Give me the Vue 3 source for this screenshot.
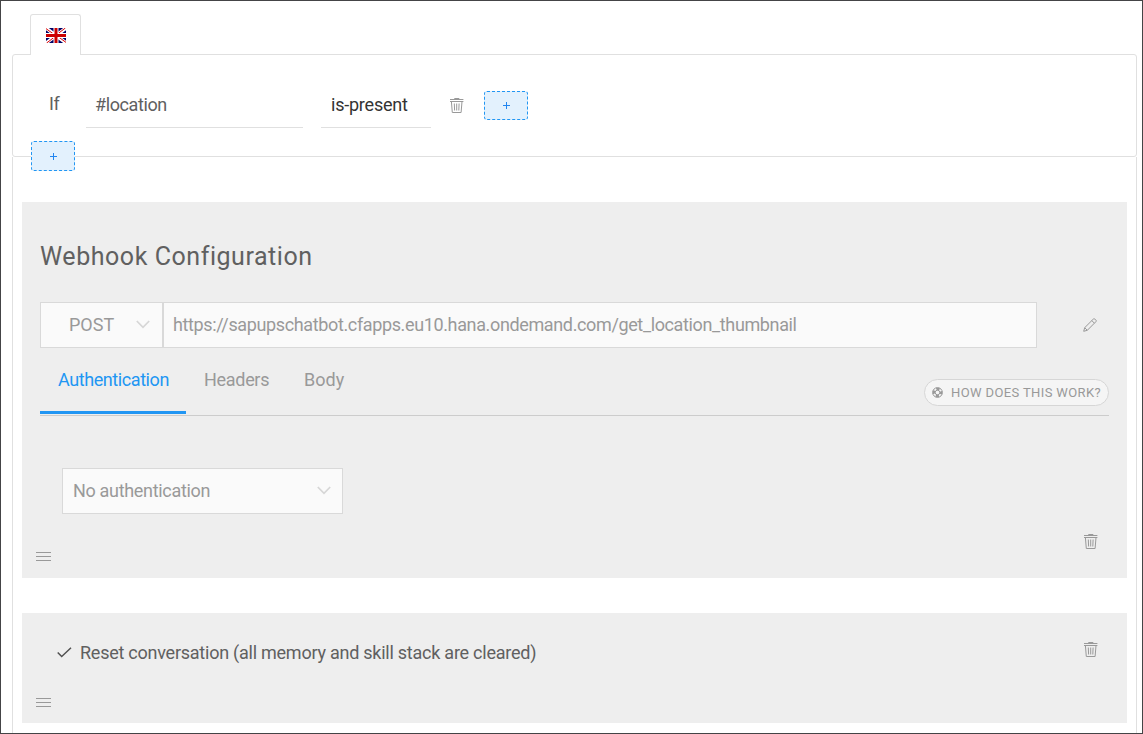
<script setup>
import { h } from 'vue'

const tabs = [
  { label: 'Authentication', cls: 'tab active' },
  { label: 'Headers', cls: 'tab headers' },
  { label: 'Body', cls: 'tab body' },
]

const TrashIcon = () =>
  h('svg', { width: 14, height: 16, viewBox: '0 0 14 16', fill: 'none', stroke: 'currentColor' }, [
    h('path', { d: 'M4.3 .5h5M0 1.5h13.4M0 3.5h13.4' }),
    h('path', { d: 'M1.4 3.5l.9 11h8.800l.9-11M4.300 5.500l.3 7M6.700 5.500v7M9.100 5.500l-.3 7' }),
  ])

const ChevronIcon = () =>
  h('svg', { width: 14, height: 9, viewBox: '0 0 14 9', fill: 'none', stroke: 'currentColor', 'stroke-width': 1.7 }, [
    h('path', { d: 'M.8 1l6.2 6.3L13.2 1' }),
  ])

const GripIcon = () =>
  h('svg', { width: 15, height: 9, viewBox: '0 0 15 9', stroke: 'currentColor' }, [
    h('path', { d: 'M0 .5h15M0 4.5h15M0 8.5h15' }),
  ])
</script>

<template>
  <div class="frame">
    <div class="lang-tab">
      <svg width="20" height="15" viewBox="0 0 20 15">
        <rect width="20" height="15" fill="#006" />
        <path d="M0 0L20 15M20 0L0 15" stroke="#fff" stroke-width="3.4" />
        <path d="M0 .6L8 6.400M20 14.400L12 8.600M19.400 0L12 5.600M.6 15L8 9.400" stroke="#d00" stroke-width="1" />
        <path d="M10 0v15M0 7.500h20" stroke="#fff" stroke-width="5" />
        <path d="M10 0v15M0 7.500h20" stroke="#c00" stroke-width="3" />
      </svg>
    </div>

    <section class="condition">
      <div class="row">
        <span class="if">If</span>
        <div class="field name"><span>#location</span></div>
        <div class="field op"><span>is-present</span></div>
        <TrashIcon class="icon" />
        <button class="add"><svg width="7" height="7" viewBox="0 0 7 7" stroke="currentColor"><path d="M0 3.500h7M3.500 0v7" /></svg></button>
      </div>
      <button class="add below"><svg width="7" height="7" viewBox="0 0 7 7" stroke="currentColor"><path d="M0 3.500h7M3.500 0v7" /></svg></button>
    </section>

    <section class="actions">
      <article class="card webhook">
        <h2><span>Webhook Configuration</span></h2>
        <div class="request">
          <div class="box method"><span>POST</span><ChevronIcon class="chev" /></div>
          <div class="box url"><span>https://sapupschatbot.cfapps.eu10.hana.ondemand.com/get_location_thumbnail</span></div>
          <svg class="icon pencil" width="14" height="14" viewBox="0 0 14 14" fill="none" stroke="currentColor">
            <path d="M.7 13.300l1-3.600L10.300 1.100q.8-.8 1.600 0l1 1q.8.8 0 1.600L4.300 12.300zM8.800 2.600l2.600 2.600M1.700 9.700l2.600 2.600" />
          </svg>
        </div>
        <nav>
          <div v-for="t in tabs" :key="t.label" :class="t.cls"><span>{{ t.label }}</span></div>
          <div class="help">
            <svg width="11" height="11" viewBox="0 0 11 11" fill="none" stroke="currentColor">
              <circle cx="5.500" cy="5.500" r="4.900" />
              <circle cx="5.500" cy="5.500" r="3.500" stroke-width="2.400" stroke-dasharray="3.300 2.200" stroke-dashoffset="1.650" />
              <circle cx="5.500" cy="5.500" r="2.300" />
            </svg>
            <span>HOW DOES THIS WORK?</span>
          </div>
        </nav>
        <div class="box auth"><span>No authentication</span><ChevronIcon class="chev" /></div>
        <div class="foot"><GripIcon class="icon" /><TrashIcon class="icon trash" /></div>
      </article>

      <article class="card reset">
        <div class="reset-row">
          <svg class="check" width="15" height="11" viewBox="0 0 15 11" fill="none" stroke="currentColor" stroke-width="1.500">
            <path d="M.7 5.500l4 4L14 .8" />
          </svg>
          <span class="reset-text">Reset conversation (all memory and skill stack are cleared)</span>
          <TrashIcon class="icon trash" />
        </div>
        <GripIcon class="icon grip" />
      </article>
    </section>
  </div>
</template>

<style>
body { background: #fff; }
</style>

<style scoped>
* { box-sizing: border-box; }
.frame { width: 1143px; height: 734px; border: 1px solid #444446; padding: 13px 5px 0 11px; overflow: hidden; font: 18px/24px Roboto, "Liberation Sans", sans-serif; color: #606060; display: flex; flex-direction: column; }
svg { display: block; flex: none; }
span { white-space: nowrap; }
.lang-tab { width: 51px; height: 41px; margin: 0 0 -1px 18px; border: 1px solid #e0e0e0; border-bottom: 0; border-radius: 3px 3px 0 0; background: #fff; padding: 13px 0 0 15px; position: relative; z-index: 1; flex: none; }
.condition { height: 103px; flex: none; border: 1px solid #e0e0e0; border-radius: 3px; padding: 36px 0 0 36px; display: flex; flex-direction: column; align-items: flex-start; }
.row { display: flex; height: 37px; align-items: flex-start; }
.if { width: 37px; padding-top: 1px; letter-spacing: -.5px; }
.field { height: 37px; border-bottom: 1px solid #e0e0e0; padding: 2px 0 0 9px; letter-spacing: -.4px; }
.name { width: 217px; margin-right: 18px; }
.op { width: 110px; padding-left: 10px; color: #333; margin-right: 19px; letter-spacing: -.22px; }
.icon { color: #999; }
.row .icon { margin: 7px 20px 0 0; }
.add { width: 44px; height: 29px; padding: 0; border: 1px dashed #2196f3; border-radius: 3px; background: #e3f1fd; color: #2185f0; display: flex; align-items: center; justify-content: center; }
.below { height: 30px; margin: 13px 0 0 -18px; flex: none; position: relative; z-index: 1; padding-top: 1px; }
.actions { flex: 1; border: solid #e0e0e0; border-width: 0 1px; padding: 45px 9px 0; display: flex; flex-direction: column; gap: 35px; }
.card { background: #eee; flex: none; }
.webhook { height: 376px; padding: 37px 18px 0; display: flex; flex-direction: column; }
h2 { margin: 0; font-weight: 400; font-size: 25px; line-height: 36px; height: 63px; letter-spacing: .55px; }
.request { display: flex; align-items: center; height: 46px; }
.box { height: 46px; border: 1px solid #d9d9d9; background: #fafafa; color: #999; display: flex; align-items: center; justify-content: space-between; }
.method { width: 123px; padding: 0 12px 0 28px; }
.url { width: 874px; padding: 0 0 0 9px; letter-spacing: -.365px; }
.chev { color: #d6d6d6; }
.method .chev { margin-top: -2px; }
.pencil { margin: -1px 0 0 46px; }
nav { display: flex; height: 68px; border-bottom: 1px solid #ccc; color: #999; }
.tab { height: 66px; padding: 20px 0 0; }
.active { width: 146px; padding-left: 18px; border-bottom: 3px solid #2196f3; color: #2196f3; letter-spacing: -.42px; }
.headers { width: 100px; padding-left: 18px; letter-spacing: -.3px; }
.body { padding-left: 18px; }
.help { margin: 31px 0 0 auto; width: 185px; height: 27px; border: 1px solid #d6d6d6; border-radius: 14px; background: #f5f5f5; display: flex; align-items: center; gap: 8px; padding-left: 7px; font-size: 13px; letter-spacing: .38px; }
.auth { width: 281px; margin: 52px 0 0 22px; padding: 0 11px 1px 10px; letter-spacing: -.32px; }
.foot { display: flex; justify-content: space-between; padding: 20px 11px 0 0; margin-left: -4px; }
.foot > .icon:first-child { margin-top: 18px; }
.reset { height: 110px; padding: 28px 29px 0 14px; }
.reset-row { display: flex; height: 57px; }
.check { margin: 6px 8px 0 21px; color: #505050; }
.reset-text { letter-spacing: -.245px; }
.reset .trash { margin: 1px 0 0 auto; }
</style>
